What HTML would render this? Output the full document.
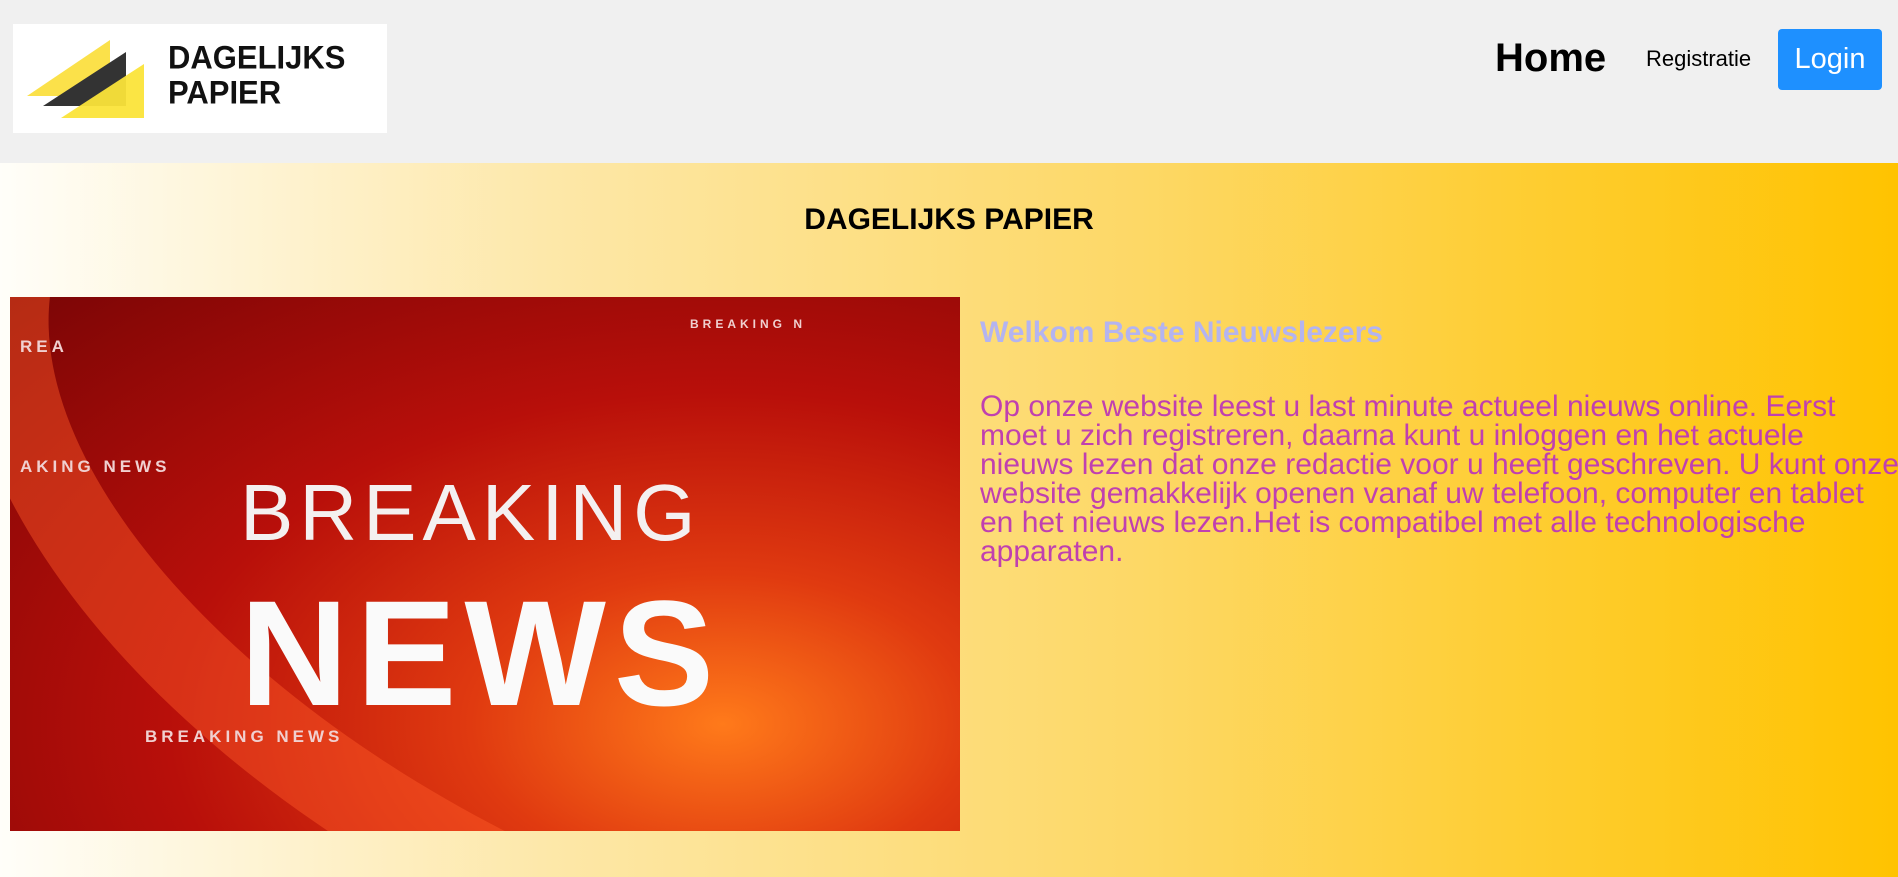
<!DOCTYPE html>
<html><head><meta charset="utf-8"><style>
html,body{margin:0;width:1898px;height:877px;overflow:hidden;}
body{font-family:"Liberation Sans",Arial,sans-serif;position:relative;}
.hdr{height:163px;background:#f0f0f0;position:relative;}
.logo{position:absolute;left:13px;top:24px;width:374px;height:109px;background:#fff;}
.logo .t{position:absolute;left:155px;top:18px;font:900 31px/33px "Liberation Sans",sans-serif;color:#111;transform:scaleY(1.05);}
.home{position:absolute;left:1495px;top:36px;font-weight:bold;font-size:40px;color:#000;}
.reg{position:absolute;left:1646px;top:46px;font-size:22px;color:#000;}
.login{position:absolute;left:1778px;top:29px;width:104px;height:61px;background:#1e90ff;border-radius:4px;color:#fff;font-size:29px;line-height:61px;text-align:center;}
.main{position:absolute;top:163px;left:0;width:1898px;height:714px;overflow:hidden;background:linear-gradient(to right,#fffef9 0%,#fde7a6 30%,#fdd866 60%,#ffc300 100%);}
h1{position:absolute;top:40px;left:0;width:1898px;margin:0;text-align:center;font-size:30px;font-weight:bold;color:#000;}
.img{position:absolute;left:10px;top:134px;width:950px;height:534px;overflow:hidden;background:radial-gradient(ellipse at 75% 80%,#ff7a1a 0%,#e03a10 25%,#b80f0a 55%,#7a0505 100%);}
.img .band{position:absolute;left:-100px;top:-200px;width:1400px;height:700px;border-radius:50%;border:90px solid rgba(255,90,40,.45);transform:rotate(25deg);}
.img .b{position:absolute;left:230px;top:170px;color:#f4f0f0;font-size:80px;letter-spacing:6px;}
.img .n{position:absolute;left:230px;top:270px;color:#fafafa;font-size:150px;font-weight:bold;letter-spacing:8px;}
.img .s{position:absolute;color:#f0d0d0;font-weight:bold;font-size:17px;letter-spacing:4px;}
.txt{position:absolute;left:980px;top:153px;width:918px;}
.txt h2{margin:0;font-size:30px;line-height:34.5px;color:#b4b4f0;font-weight:bold;}
.txt p{margin:41px 0 0;font-size:30px;line-height:29px;color:#c040b0;white-space:nowrap;}
</style></head><body>
<div class="hdr">
<div class="logo">
<svg width="150" height="109" style="position:absolute;left:0;top:0">
<polygon points="14,72 97,16 97,72" fill="#fbe14a"/>
<polygon points="30,82 113,28 113,82" fill="#333"/>
<polygon points="48,94 131,40 131,94" fill="#fbe43a" opacity=".95"/>
</svg>
<div class="t">DAGELIJKS<br>PAPIER</div>
</div>
<div class="home">Home</div>
<div class="reg">Registratie</div>
<div class="login">Login</div>
</div>
<div class="main">
<h1>DAGELIJKS PAPIER</h1>
<div class="img">
<div class="band"></div>
<div class="s" style="left:10px;top:40px">REA</div>
<div class="s" style="left:10px;top:160px">AKING NEWS</div>
<div class="s" style="left:135px;top:430px">BREAKING NEWS</div>
<div class="s" style="left:680px;top:20px;font-size:12px">BREAKING N</div>
<div class="b">BREAKING</div>
<div class="n">NEWS</div>
</div>
<div class="txt">
<h2>Welkom Beste Nieuwslezers</h2>
<p>Op onze website leest u last minute actueel nieuws online. Eerst<br>moet u zich registreren, daarna kunt u inloggen en het actuele<br>nieuws lezen dat onze redactie voor u heeft geschreven. U kunt onze<br>website gemakkelijk openen vanaf uw telefoon, computer en tablet<br>en het nieuws lezen.Het is compatibel met alle technologische<br>apparaten.</p>
</div>
</div>
</body></html>
